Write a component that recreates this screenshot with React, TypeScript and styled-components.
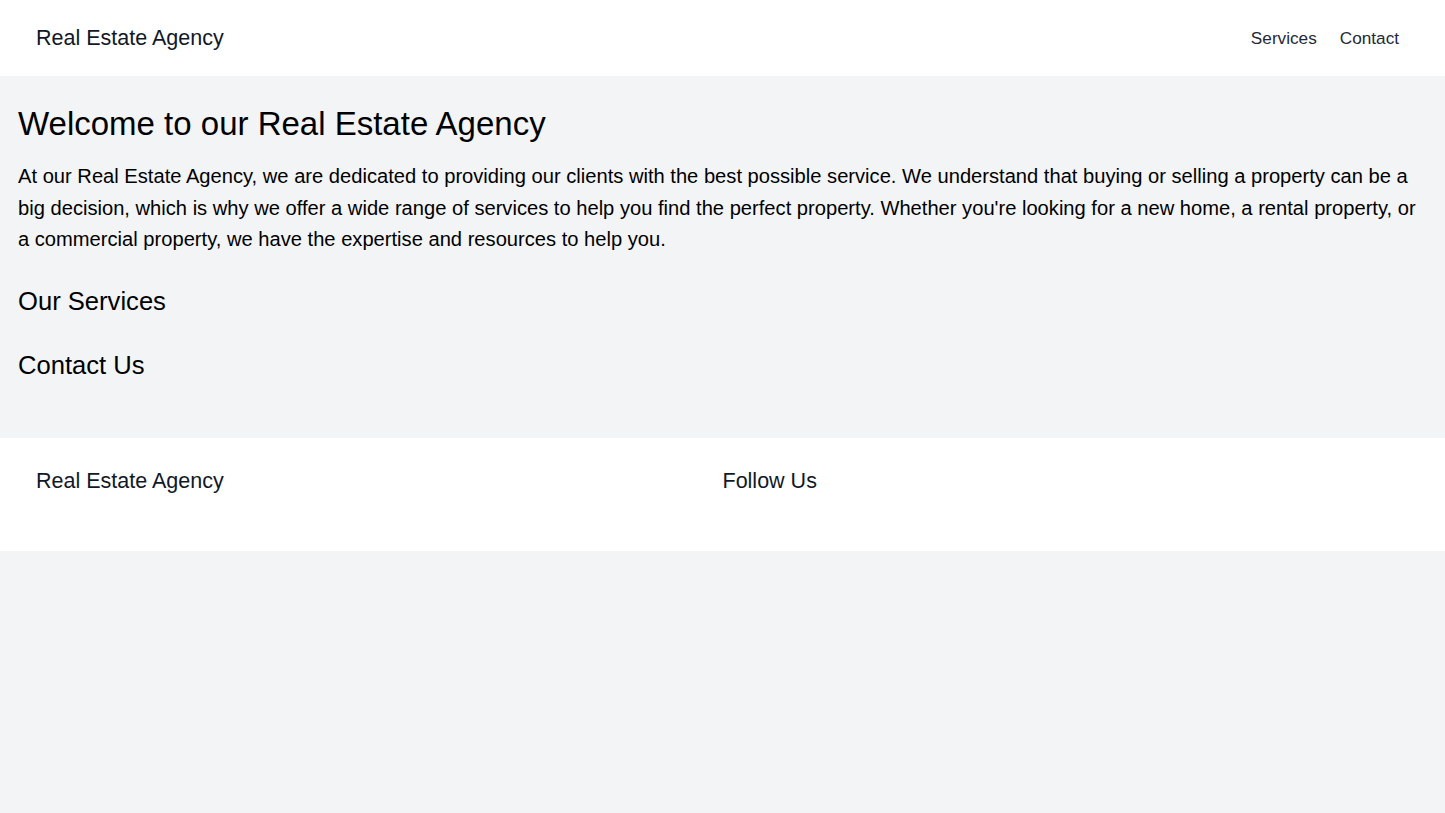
import React from "react";
import styled, { createGlobalStyle } from "styled-components";

const GlobalStyle = createGlobalStyle`
  html, body {
    margin: 0;
    padding: 0;
    background-color: #f3f4f6;
    font-family: "Liberation Sans", Arial, sans-serif;
    color: #000000;
  }
  * {
    box-sizing: border-box;
  }
`;

const links = ["Services", "Contact"];

const App = () => {
  return (
    <>
      <GlobalStyle />
      <Header>
        <Brand>Real Estate Agency</Brand>
        <Nav>
          {links.map((l) => (
            <NavItem key={l} href="#">
              {l}
            </NavItem>
          ))}
        </Nav>
      </Header>
      <Main>
        <Title>Welcome to our Real Estate Agency</Title>
        <Intro>
          At our Real Estate Agency, we are dedicated to providing our clients
          with the best possible service. We understand that buying or selling a
          property can be a big decision, which is why we offer a wide range of
          services to help you find the perfect property. Whether you're looking
          for a new home, a rental property, or a commercial property, we have
          the expertise and resources to help you.
        </Intro>
        <Section>
          <SectionTitle>Our Services</SectionTitle>
        </Section>
        <Section>
          <SectionTitle>Contact Us</SectionTitle>
        </Section>
      </Main>
      <Footer>
        <FooterCol>
          <FooterTitle>Real Estate Agency</FooterTitle>
        </FooterCol>
        <FooterCol>
          <FooterTitle>Follow Us</FooterTitle>
        </FooterCol>
      </Footer>
    </>
  );
};

export default App;

const Header = styled.header`
  height: 76px;
  background-color: #ffffff;
  display: flex;
  align-items: center;
  justify-content: space-between;
  padding: 0 46px 0 36px;
`;

const Brand = styled.div`
  font-size: 21.5px;
  line-height: 28px;
  color: #111827;
`;

const Nav = styled.nav`
  display: flex;
  gap: 23px;
`;

const NavItem = styled.a`
  font-size: 17.2px;
  line-height: 24px;
  color: #1f2937;
  text-decoration: none;
`;

const Main = styled.main`
  padding: 24px 18px 25px;
`;

const Title = styled.h1`
  margin: 0;
  font-size: 33px;
  line-height: 48px;
  font-weight: 400;
`;

const Intro = styled.p`
  margin: 13px 0 29px;
  font-size: 20.15px;
  line-height: 31.5px;
`;

const Section = styled.section`
  margin-bottom: 32px;
`;

const SectionTitle = styled.h2`
  margin: 0;
  font-size: 25.6px;
  line-height: 32px;
  font-weight: 400;
`;

const Footer = styled.footer`
  background-color: #ffffff;
  display: grid;
  grid-template-columns: 1fr 1fr;
  padding: 29px 36px 56px;
`;

const FooterCol = styled.div``;

const FooterTitle = styled.h3`
  margin: 0;
  font-size: 21.5px;
  line-height: 28px;
  font-weight: 400;
  color: #111827;
`;
